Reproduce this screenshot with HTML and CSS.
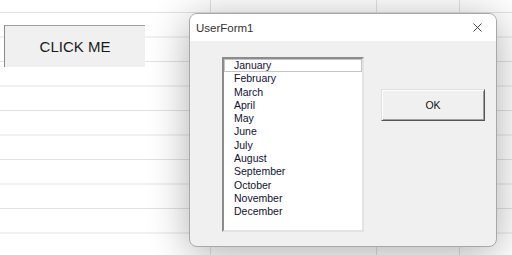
FILE: index.html
```html
<!DOCTYPE html>
<html lang="en">
<head>
    <meta charset="UTF-8">
    <title>UserForm1</title>
    <link rel="stylesheet" href="styles.css">
</head>
<body>
    <div class="sheet">
        <button class="click-btn">CLICK ME</button>

        <div class="dialog">
            <div class="title-bar">
                <span class="title">UserForm1</span>
                <svg class="close-icon" viewBox="0 0 10 10">
                    <path d="M0.5 0.5L9.5 9.5M9.5 0.5L0.5 9.5"></path>
                </svg>
            </div>
            <div class="dialog-body">
                <ul class="listbox">
                    <li class="focused">January</li>
                    <li>February</li>
                    <li>March</li>
                    <li>April</li>
                    <li>May</li>
                    <li>June</li>
                    <li>July</li>
                    <li>August</li>
                    <li>September</li>
                    <li>October</li>
                    <li>November</li>
                    <li>December</li>
                </ul>
                <button class="ok-btn">OK</button>
            </div>
        </div>
    </div>
</body>
</html>
```

FILE: styles.css
```css
html, body {
    margin: 0;
    height: 100%;
    overflow: hidden;
}
body {
    font-family: 'Liberation Sans', Arial, sans-serif;
    background-color: #ffffff;
    /* spreadsheet grid */
    background-image:
        linear-gradient(to right, #e2e2e2 1px, transparent 1px),
        linear-gradient(to bottom, #e2e2e2 1px, transparent 1px);
    background-size: 83px 24.5px;
    background-position: 44px 12px;
}
.sheet {
    display: flex;
    align-items: flex-start;
    padding: 13px 0 0 4px;
}
.click-btn {
    margin-top: 12px;
    width: 141px;
    height: 42px;
    background-color: #f0f0f0;
    border: none;
    border-top: 1px solid #a0a0a0;
    border-left: 1px solid #8a8a8a;
    font-family: 'Liberation Sans', Arial, sans-serif;
    font-size: 15px;
    color: #1a1a1a;
    padding: 0;
}
.dialog {
    margin-left: 44px;
    width: 306px;
    height: 232px;
    border: 1px solid #a8a8a8;
    border-radius: 8px;
    background-color: #f0f0f0; /* form grey */
    box-shadow: 0 6px 40px rgba(0, 0, 0, 0.32);
    overflow: hidden;
    display: flex;
    flex-direction: column;
}
.title-bar {
    height: 27px;
    background-color: #ffffff;
    display: flex;
    align-items: center;
    justify-content: space-between;
    padding: 0 14px 0 6px;
}
.title {
    font-size: 11.5px;
    color: #333;
}
.close-icon {
    width: 9px;
    height: 9px;
    fill: none;
    stroke: #333;
    stroke-width: 1;
}
.dialog-body {
    display: flex;
    align-items: flex-start;
    padding: 16px 0 0 32px;
}
.listbox {
    list-style: none;
    margin: 0;
    padding: 0;
    width: 138px;
    height: 171px;
    background-color: #ffffff;
    border: 2px solid;
    border-color: #8c8c8c #e3e3e3 #e3e3e3 #8c8c8c;
    font-size: 10.5px;
    color: #101030;
}
.listbox li {
    height: 13.3px;
    line-height: 13.3px;
    padding-left: 10px;
    box-sizing: border-box;
}
.listbox li.focused {
    outline: 1px solid #c4c4c4;
    outline-offset: -1px;
}
.ok-btn {
    margin: 32px 0 0 17px;
    width: 104px;
    height: 32px;
    background-color: #f0f0f0;
    border: 1px solid;
    border-color: #e0e0e0 #555 #555 #e0e0e0;
    box-shadow: inset 1px 1px #ffffff, inset -1px -1px #a0a0a0;
    font-family: 'Liberation Sans', Arial, sans-serif;
    font-size: 10.5px;
    color: #111;
    padding: 0;
}
```
